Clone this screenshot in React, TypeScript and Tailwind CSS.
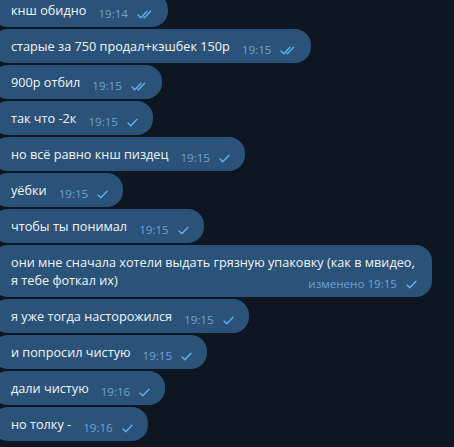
import React from 'react';

type Msg = { text: string; time: string; read?: boolean; edited?: boolean };

const messages: Msg[] = [
  { text: 'кнш обидно', time: '19:14', read: true },
  { text: 'старые за 750 продал+кэшбек 150р', time: '19:15', read: true },
  { text: '900р отбил', time: '19:15', read: true },
  { text: 'так что -2к', time: '19:15' },
  { text: 'но всё равно кнш пиздец', time: '19:15' },
  { text: 'уёбки', time: '19:15' },
  { text: 'чтобы ты понимал', time: '19:15' },
  {
    text: 'они мне сначала хотели выдать грязную упаковку (как в мвидео, я тебе фоткал их)',
    time: '19:15',
    edited: true,
  },
  { text: 'я уже тогда насторожился', time: '19:15' },
  { text: 'и попросил чистую', time: '19:15' },
  { text: 'дали чистую', time: '19:16' },
  { text: 'но толку -', time: '19:16' },
];

const Check: React.FC<{ double?: boolean }> = ({ double }) =>
  double ? (
    <svg width="16" height="9" viewBox="0 0 16 9" fill="none" stroke="#64b5f2" strokeWidth="1.3" strokeLinecap="round" strokeLinejoin="round">
      <polyline points="1,5 3.8,7.8 10,1.2" />
      <polyline points="6.8,7.2 7.4,7.8 13.6,1.2" />
    </svg>
  ) : (
    <svg width="11" height="9" viewBox="0 0 11 9" fill="none" stroke="#64b5f2" strokeWidth="1.3" strokeLinecap="round" strokeLinejoin="round">
      <polyline points="1,5 3.8,7.8 10,1.2" />
    </svg>
  );

const Bubble: React.FC<{ m: Msg }> = ({ m }) => (
  <div className="self-start max-w-[440px] rounded-[16px] bg-[#2b5278] pl-[19px] pr-[15px] py-[8px] flow-root">
    <p className="text-[12.7px] leading-[18px] text-[#f2f5f8]">
      {m.text}
      <span className="float-right relative top-[6px] ml-[12px] flex items-center gap-[9px] text-[11.6px] leading-[14px] text-[#73a2d3]">
        <span>{m.edited ? `изменено ${m.time}` : m.time}</span>
        <Check double={m.read} />
      </span>
    </p>
  </div>
);

export default function App() {
  return (
    <div
      className="w-[454px] h-[447px] overflow-hidden bg-[#0e1621]"
      style={{ fontFamily: '"Open Sans", "Noto Sans", sans-serif' }}
    >
      <div className="-mt-[7px] -ml-[8px] flex flex-col gap-[2px]">
        {messages.map((m, i) => (
          <Bubble key={i} m={m} />
        ))}
      </div>
    </div>
  );
}
